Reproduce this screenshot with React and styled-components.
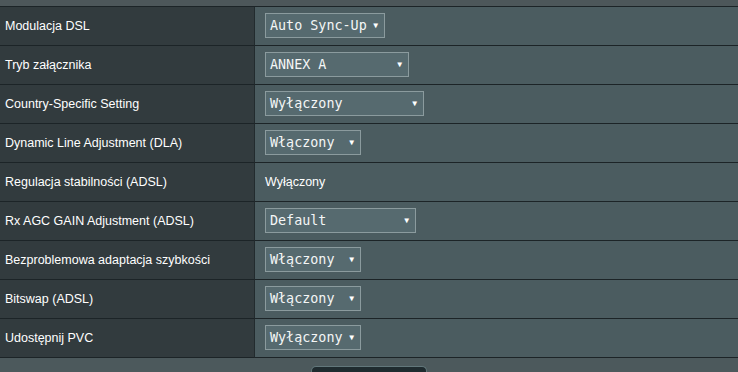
import { Fragment } from "react";
import styled, { createGlobalStyle } from "styled-components";

const GlobalStyle = createGlobalStyle`
  html, body {
    margin: 0;
    padding: 0;
    background: #4c595c;
  }
  body {
    font-family: "Liberation Sans", Arial, sans-serif;
  }
`;

const ROWS = [
  { label: "Modulacja DSL", value: "Auto Sync-Up", width: 120 },
  { label: "Tryb załącznika", value: "ANNEX A", width: 144 },
  { label: "Country-Specific Setting", value: "Wyłączony", width: 159 },
  { label: "Dynamic Line Adjustment (DLA)", value: "Włączony", width: 96 },
  { label: "Regulacja stabilności (ADSL)", text: "Wyłączony" },
  { label: "Rx AGC GAIN Adjustment (ADSL)", value: "Default", width: 151 },
  { label: "Bezproblemowa adaptacja szybkości", value: "Włączony", width: 96 },
  { label: "Bitswap (ADSL)", value: "Włączony", width: 96 },
  { label: "Udostępnij PVC", value: "Wyłączony", width: 96 },
];

const Page = styled.div`
  width: 738px;
  height: 372px;
  overflow: hidden;
  display: flex;
  flex-direction: column;
  background: #4c595c;
`;

const TopStrip = styled.div`
  height: 6px;
  background: #4d575a;
  flex-shrink: 0;
`;

const Table = styled.div`
  display: grid;
  grid-template-columns: 255px 1fr;
  border-top: 1px solid #1c2427;
`;

const Label = styled.div`
  height: 38px;
  display: flex;
  align-items: center;
  padding-left: 5px;
  background: #323b3e;
  color: #ffffff;
  font-size: 12.5px;
  border-right: 1px solid #222b2e;
  border-bottom: 1px solid #1c2427;
`;

const Cell = styled.div`
  height: 38px;
  display: flex;
  align-items: center;
  padding-left: 10px;
  background: #4b5c60;
  border-bottom: 1px solid #1c2427;
`;

const PlainValue = styled.span`
  color: #ffffff;
  font-size: 12.5px;
`;

const Select = styled.div`
  box-sizing: border-box;
  width: ${({ $w }) => $w}px;
  height: 25px;
  display: flex;
  align-items: center;
  justify-content: space-between;
  padding: 0 6px 0 4px;
  margin-bottom: 1px;
  background: #566a6f;
  border: 1px solid #8b9b9e;
  color: #f4f6f6;
  font-family: "DejaVu Sans Mono", "Liberation Mono", monospace;
  font-size: 13.4px;
  white-space: nowrap;
`;

const Arrow = styled.span`
  font-size: 8px;
  margin-left: 6px;
  color: #ffffff;
`;

const Footer = styled.div`
  flex: 1;
  display: flex;
  justify-content: flex-start;
  align-items: flex-end;
  padding-left: 311px;
`;

const ApplyButton = styled.div`
  width: 114px;
  height: 5px;
  background: #1f2b2f;
  border: 1px solid #62777b;
  border-bottom: none;
  border-radius: 5px 5px 0 0;
`;

export default function App() {
  return (
    <Page>
      <GlobalStyle />
      <TopStrip />
      <Table>
        {ROWS.map((row) => (
          <Fragment key={row.label}>
            <Label>{row.label}</Label>
            <Cell>
              {row.text ? (
                <PlainValue>{row.text}</PlainValue>
              ) : (
                <Select $w={row.width}>
                  <span>{row.value}</span>
                  <Arrow>▼</Arrow>
                </Select>
              )}
            </Cell>
          </Fragment>
        ))}
      </Table>
      <Footer>
        <ApplyButton />
      </Footer>
    </Page>
  );
}
